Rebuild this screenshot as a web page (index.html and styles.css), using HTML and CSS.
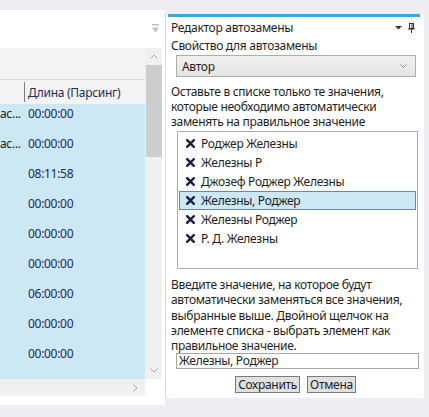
FILE: index.html
```html
<!DOCTYPE html>
<html lang="ru">
<head>
<meta charset="utf-8">
<title>Редактор автозамены</title>
<link rel="stylesheet" href="styles.css">
</head>
<body>
<div class="app">
  <div class="left">
    <div class="toolbar">
      <svg class="filter-icon" width="7" height="9" viewBox="0 0 7 9"><rect x="0" y="0" width="7" height="1.5" fill="#b7bfcd"/><polygon points="0,3.5 7,3.5 3.5,8.5" fill="#b7bfcd"/></svg>
    </div>
    <div class="gridwrap">
      <div class="gridcol">
        <div class="groupband"></div>
        <div class="colheader"><span class="hsep"></span><span class="coltitle">Длина (Парсинг)</span></div>
        <div class="rows">
          <div class="row"><span class="c1">ас...</span><span class="c2">00:00:00</span></div>
          <div class="row"><span class="c1">ас...</span><span class="c2">00:00:00</span></div>
          <div class="row"><span class="c1"></span><span class="c2">08:11:58</span></div>
          <div class="row"><span class="c1"></span><span class="c2">00:00:00</span></div>
          <div class="row"><span class="c1"></span><span class="c2">00:00:00</span></div>
          <div class="row"><span class="c1"></span><span class="c2">00:00:00</span></div>
          <div class="row"><span class="c1"></span><span class="c2">06:00:00</span></div>
          <div class="row"><span class="c1"></span><span class="c2">00:00:00</span></div>
          <div class="row"><span class="c1"></span><span class="c2">00:00:00</span></div>
        </div>
        <div class="hscroll">
          <svg width="5" height="8" viewBox="0 0 5 8"><polyline points="0.5,0.5 4,4 0.5,7.5" fill="none" stroke="#a6a6a6" stroke-width="1"/></svg>
        </div>
      </div>
      <div class="vscroll">
        <div class="sarrow">
          <svg width="8" height="5" viewBox="0 0 8 5"><polyline points="0.5,4.5 4,1 7.5,4.5" fill="none" stroke="#a6a6a6" stroke-width="1"/></svg>
        </div>
        <div class="thumb"></div>
        <div class="track"></div>
        <div class="sarrow">
          <svg width="8" height="5" viewBox="0 0 8 5"><polyline points="0.5,0.5 4,4 7.5,0.5" fill="none" stroke="#a6a6a6" stroke-width="1"/></svg>
        </div>
      </div>
    </div>
  </div>
  <div class="panel">
    <div class="bluebar"></div>
    <div class="content">
      <div class="titlerow">
        <span class="title">Редактор автозамены</span>
        <span class="title-icons">
          <svg width="7" height="4" viewBox="0 0 7 4"><polygon points="0,0 7,0 3.5,3.5" fill="#333"/></svg>
          <svg width="7" height="10" viewBox="0 0 7 10"><rect x="1.5" y="0.5" width="4" height="5" fill="none" stroke="#333" stroke-width="1"/><line x1="4" y1="1" x2="4" y2="5" stroke="#333" stroke-width="1"/><line x1="0" y1="6" x2="7" y2="6" stroke="#333" stroke-width="1"/><line x1="3.5" y1="6" x2="3.5" y2="10" stroke="#333" stroke-width="1"/></svg>
        </span>
      </div>
      <div class="label">Свойство для автозамены</div>
      <div class="dropdown">
        <span>Автор</span>
        <svg width="7" height="4" viewBox="0 0 7 4"><polyline points="0.5,0.5 3.5,3.5 6.5,0.5" fill="none" stroke="#8a8a8a" stroke-width="1"/></svg>
      </div>
      <div class="para1">Оставьте в списке только те значения, которые необходимо автоматически заменять на правильное значение</div>
      <div class="listbox">
        <div class="item"><svg class="x" width="9" height="9" viewBox="0 0 9 9"><path d="M1.2,1.2 L7.8,7.8 M7.8,1.2 L1.2,7.8" stroke="#1c1c48" stroke-width="2.4" stroke-linecap="square"/></svg><span>Роджер Железны</span></div>
        <div class="item"><svg class="x" width="9" height="9" viewBox="0 0 9 9"><path d="M1.2,1.2 L7.8,7.8 M7.8,1.2 L1.2,7.8" stroke="#1c1c48" stroke-width="2.4" stroke-linecap="square"/></svg><span>Железны Р</span></div>
        <div class="item"><svg class="x" width="9" height="9" viewBox="0 0 9 9"><path d="M1.2,1.2 L7.8,7.8 M7.8,1.2 L1.2,7.8" stroke="#1c1c48" stroke-width="2.4" stroke-linecap="square"/></svg><span>Джозеф Роджер Железны</span></div>
        <div class="item selected"><svg class="x" width="9" height="9" viewBox="0 0 9 9"><path d="M1.2,1.2 L7.8,7.8 M7.8,1.2 L1.2,7.8" stroke="#1c1c48" stroke-width="2.4" stroke-linecap="square"/></svg><span>Железны, Роджер</span></div>
        <div class="item"><svg class="x" width="9" height="9" viewBox="0 0 9 9"><path d="M1.2,1.2 L7.8,7.8 M7.8,1.2 L1.2,7.8" stroke="#1c1c48" stroke-width="2.4" stroke-linecap="square"/></svg><span>Железны Роджер</span></div>
        <div class="item"><svg class="x" width="9" height="9" viewBox="0 0 9 9"><path d="M1.2,1.2 L7.8,7.8 M7.8,1.2 L1.2,7.8" stroke="#1c1c48" stroke-width="2.4" stroke-linecap="square"/></svg><span>Р. Д. Железны</span></div>
      </div>
      <div class="para2">Введите значение, на которое будут автоматически заменяться все значения, выбранные выше. Двойной щелчок на элементе списка - выбрать элемент как правильное значение.</div>
      <div class="input">Железны, Роджер</div>
      <div class="buttons">
        <span class="btn">Сохранить</span>
        <span class="btn">Отмена</span>
      </div>
    </div>
  </div>
</div>
</body>
</html>
```

FILE: styles.css
```css
html, body {
  margin: 0;
  padding: 0;
}
body {
  background: #eeeef2;
  width: 429px;
  height: 417px;
  overflow: hidden;
  font-family: "Noto Sans", "Open Sans", sans-serif;
  font-size: 12px;
  letter-spacing: -0.3px;
  color: #1e1e1e;
}
.app {
  display: flex;
  align-items: flex-start;
}
.left {
  width: 165px;
  height: 395px;
  margin-top: 10px;
  background: #fff;
  display: flex;
  flex-direction: column;
}
.toolbar {
  height: 38px;
  display: flex;
  justify-content: flex-end;
  align-items: flex-start;
  padding-right: 6px;
  box-sizing: border-box;
}
.filter-icon {
  margin-top: 14px;
}
.gridwrap {
  display: flex;
  height: 348px;
}
.gridcol {
  width: 145px;
  display: flex;
  flex-direction: column;
}
.groupband {
  height: 31px;
  background: #f3f3f3;
  border-bottom: 1px solid #d9d9d9;
}
.colheader {
  height: 24px;
  background: #f3f3f3;
  display: flex;
  align-items: center;
}
.hsep {
  width: 25px;
  height: 20px;
  border-right: 1px solid #7a7a7a;
  box-sizing: border-box;
}
.coltitle {
  padding-left: 3px;
  color: #1e2f55;
  white-space: nowrap;
}
.rows {
  height: 275px;
  background: #cce8f5;
  overflow: hidden;
}
.row {
  height: 30px;
  line-height: 20px;
  display: flex;
  white-space: nowrap;
  color: #24245e;
}
.c1 {
  width: 25px;
  overflow: hidden;
  color: #222;
}
.c2 {
  padding-left: 3px;
}
.hscroll {
  height: 17px;
  background: #f0f0f0;
  display: flex;
  justify-content: flex-end;
  align-items: center;
  padding-right: 7px;
}
.vscroll {
  width: 17px;
  height: 331px;
  background: #f0f0f0;
  display: flex;
  flex-direction: column;
}
.sarrow {
  height: 17px;
  display: flex;
  align-items: center;
  justify-content: center;
}
.thumb {
  height: 92px;
  margin-left: 1px;
  background: #cdcdcd;
}
.track {
  flex: 1;
}
.panel {
  width: 259px;
  height: 384px;
  margin-top: 14px;
  border-left: 1px solid #dadada;
  background: #fff;
  box-sizing: border-box;
  padding: 0 4px 0 2px;
}
.bluebar {
  height: 3px;
  background: #3ea6dd;
}
.content {
  padding-left: 3px;
  display: flex;
  flex-direction: column;
}
.titlerow {
  height: 21px;
  display: flex;
  align-items: center;
  justify-content: space-between;
  padding-right: 5px;
}
.title-icons {
  display: flex;
  align-items: center;
  gap: 6px;
}
.label {
  line-height: 16px;
}
.dropdown {
  margin-top: 1px;
  margin-left: 5px;
  width: 240px;
  height: 22px;
  box-sizing: border-box;
  border: 1px solid #acacac;
  background: linear-gradient(#f0f0f0, #e5e5e5);
  display: flex;
  align-items: center;
  justify-content: space-between;
  padding: 0 8px 0 5px;
}
.para1 {
  margin-top: 7px;
  line-height: 15px;
}
.listbox {
  margin-top: 2px;
  margin-left: 6px;
  width: 241px;
  height: 138px;
  box-sizing: border-box;
  border: 1px solid #acacac;
  padding-top: 2px;
}
.item {
  height: 19px;
  display: flex;
  align-items: center;
  padding-left: 7px;
  gap: 6px;
  margin: 0 1px;
  box-sizing: border-box;
  white-space: nowrap;
}
.item.selected {
  background: #cce8f5;
  border: 1px solid #26a0da;
  padding-left: 6px;
}
.para2 {
  margin-top: 8px;
  line-height: 15.25px;
}
.input {
  margin-left: 5px;
  width: 243px;
  height: 16px;
  box-sizing: border-box;
  border: 1px solid #a8a8a8;
  line-height: 14px;
  padding-left: 2px;
}
.buttons {
  margin-top: 7px;
  display: flex;
  justify-content: center;
  gap: 7px;
}
.btn {
  height: 17px;
  box-sizing: border-box;
  border: 1px solid #7a7a7a;
  background: #e1e1e1;
  line-height: 15px;
  padding: 0 2px;
}
```
